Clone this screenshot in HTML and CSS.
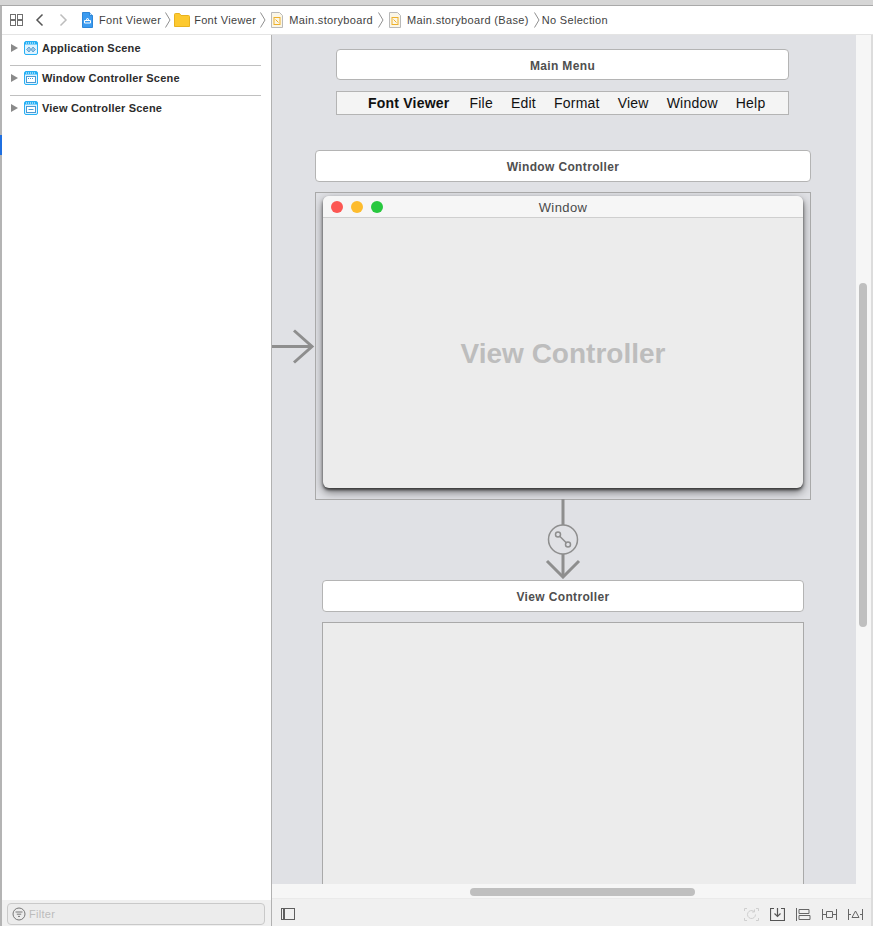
FILE: index.html
```html
<!DOCTYPE html>
<html lang="en">
<head>
<meta charset="utf-8">
<title>Font Viewer - Main.storyboard</title>
<link rel="stylesheet" href="styles.css">
</head>
<body>
<div class="app">
  <div class="topstrip"></div>
  <header class="jumpbar">
    <svg class="ic grid" width="16" height="14" viewBox="0 0 16 14"><g fill="none" stroke="#6f6f6f"><rect x="1.500" y="1.500" width="5" height="5"/><rect x="8.500" y="1.500" width="5" height="5"/><rect x="1.500" y="7.500" width="5" height="5"/><rect x="8.500" y="7.500" width="5" height="5"/></g></svg>
    <svg class="ic back" width="9" height="14" viewBox="0 0 9 14"><path d="M7.500 1.500 2 7l5.500 5.500" fill="none" stroke="#555" stroke-width="1.500"/></svg>
    <svg class="ic fwd" width="9" height="14" viewBox="0 0 9 14"><path d="M1.500 1.500 7 7l-5.500 5.500" fill="none" stroke="#bdbdbd" stroke-width="1.500"/></svg>
    <svg class="ic proj" width="11" height="16" viewBox="0 0 11 16"><path d="M.5.500h7l3 3v12H.5z" fill="#3b9bf0" stroke="#2e86d8"/><path d="M7.500.5v3h3" fill="#bfe0fb" stroke="#2e86d8"/><path d="M2.500 11V8.500h6V11zM4 8.500 5.500 6 7 8.500" fill="none" stroke="#fff"/></svg>
    <span class="crumb c1">Font Viewer</span>
    <svg class="sep s1" width="6" height="16" viewBox="0 0 6 16"><path d="M.5.500 5 8 .5 15.500" fill="none" stroke="#8f8f8f"/></svg>
    <svg class="ic folder" width="16" height="14" viewBox="0 0 16 14"><path d="M.5 13.500V1.500q0-1 1-1h4l1.500 2h7.500q1 0 1 1v10z" fill="#fdc92f" stroke="#e8b21f"/></svg>
    <span class="crumb c2">Font Viewer</span>
    <svg class="sep s2" width="6" height="16" viewBox="0 0 6 16"><path d="M.5.500 5 8 .5 15.500" fill="none" stroke="#8f8f8f"/></svg>
    <svg class="ic doc" width="12" height="16" viewBox="0 0 12 16"><path d="M.5.500h8l3 3v12H.5z" fill="#fbf6e6" stroke="#b9b9b9"/><rect x="3" y="5.500" width="6" height="7" fill="none" stroke="#eeb02a"/><path d="M4.500 7.500l3 3" stroke="#eeb02a"/></svg>
    <span class="crumb c3">Main.storyboard</span>
    <svg class="sep s3" width="6" height="16" viewBox="0 0 6 16"><path d="M.5.500 5 8 .5 15.500" fill="none" stroke="#8f8f8f"/></svg>
    <svg class="ic doc" width="12" height="16" viewBox="0 0 12 16"><path d="M.5.500h8l3 3v12H.5z" fill="#fbf6e6" stroke="#b9b9b9"/><rect x="3" y="5.500" width="6" height="7" fill="none" stroke="#eeb02a"/><path d="M4.500 7.500l3 3" stroke="#eeb02a"/></svg>
    <span class="crumb c4">Main.storyboard (Base)</span>
    <svg class="sep s4" width="6" height="16" viewBox="0 0 6 16"><path d="M.5.500 5 8 .5 15.500" fill="none" stroke="#8f8f8f"/></svg>
    <span class="crumb c5">No Selection</span>
  </header>

  <div class="main">
    <aside class="sidebar">
      <div class="tree">
        <div class="scene">
          <span class="tri"></span>
          <svg class="sicon" width="14" height="14" viewBox="0 0 14 14"><rect x=".5" y=".5" width="13" height="13" rx="1.500" fill="#dff3ff" stroke="#27b0f5"/><path d="M1 1h12v2.500H1z" fill="#27b0f5"/><path d="M2 2h1M4 2h1M6 2h1M8 2h1M10 2h1" stroke="#fff"/><path d="M2.500 8.500 5 6l2 2.500L9 6l2.500 2.500L9 11 7 8.500 5 11z" fill="#9cc4e2" stroke="#3f8fc8" stroke-width=".7"/></svg>
          <span class="sname">Application Scene</span>
        </div>
        <div class="scene">
          <span class="tri"></span>
          <svg class="sicon" width="14" height="14" viewBox="0 0 14 14"><rect x=".5" y=".5" width="13" height="13" rx="1.500" fill="#dff3ff" stroke="#27b0f5"/><path d="M1 1h12v2.500H1z" fill="#27b0f5"/><path d="M2 2h1M4 2h1M6 2h1M8 2h1M10 2h1" stroke="#fff"/><rect x="2.500" y="5.500" width="9" height="6" fill="#fff" stroke="#4b9ad2"/><path d="M4 7.500h6" stroke="#4b9ad2" stroke-dasharray="1 1"/></svg>
          <span class="sname">Window Controller Scene</span>
        </div>
        <div class="scene">
          <span class="tri"></span>
          <svg class="sicon" width="14" height="14" viewBox="0 0 14 14"><rect x=".5" y=".5" width="13" height="13" rx="1.500" fill="#dff3ff" stroke="#27b0f5"/><path d="M1 1h12v2.500H1z" fill="#27b0f5"/><path d="M2 2h1M4 2h1M6 2h1M8 2h1M10 2h1" stroke="#fff"/><rect x="2.500" y="5.500" width="9" height="6" fill="#fff" stroke="#4b9ad2"/><path d="M4.500 8.500h5" stroke="#4b9ad2"/></svg>
          <span class="sname">View Controller Scene</span>
        </div>
      </div>
      <div class="filterbar">
        <div class="filter">
          <svg width="14" height="14" viewBox="0 0 14 14"><circle cx="7" cy="7" r="6" fill="none" stroke="#777"/><path d="M3.500 5h7M4.800 7.200h4.400M6 9.400h2" stroke="#777"/></svg>
          <span class="filtertext">Filter</span>
        </div>
      </div>
    </aside>

    <section class="editor">
      <div class="viewport">
        <div class="canvas">
          <div class="node title menu-title">Main Menu</div>
          <div class="node menubar">
            <b>Font Viewer</b><span>File</span><span>Edit</span><span>Format</span><span>View</span><span>Window</span><span>Help</span>
          </div>
          <div class="node title wc-title">Window Controller</div>
          <div class="node wc-box">
            <div class="window">
              <div class="titlebar">
                <i class="dot red"></i><i class="dot yellow"></i><i class="dot green"></i>
                <span class="wintitle">Window</span>
              </div>
              <div class="winbody">View Controller</div>
            </div>
          </div>
          <svg class="node entry" width="44" height="36" viewBox="0 0 44 36"><path d="M0 18.500h39M22 2.500l18 16-18 16" fill="none" stroke="#8e8e8e" stroke-width="3"/></svg>
          <svg class="node segue" width="36" height="80" viewBox="0 0 36 80"><g fill="none" stroke="#8e8e8e"><path d="M18 0v26M18 55v22" stroke-width="3"/><circle cx="18" cy="40.500" r="14.500" stroke-width="1.500"/><path d="M2 62l16 16 16-16" stroke-width="3"/><path d="M14.500 37l7 7" stroke-width="1.500"/><circle cx="13" cy="35.500" r="2.500" stroke-width="1.500"/><circle cx="23" cy="45.500" r="2.500" stroke-width="1.500"/></g></svg>
          <div class="node title vc-title">View Controller</div>
          <div class="node vc-box"></div>
        </div>
        <div class="vtrack"><div class="vthumb"></div></div>
      </div>
      <div class="htrack"><div class="hthumb"></div></div>
      <footer class="bottombar">
        <svg width="14" height="12" viewBox="0 0 14 12"><rect x=".5" y=".5" width="13" height="11" fill="none" stroke="#5e5e5e"/><path d="M3 1v10" stroke="#5e5e5e" stroke-width="2"/></svg>
        <div class="tools">
          <svg width="15" height="13" viewBox="0 0 15 13"><g fill="none" stroke="#cfcfcf"><path d="M.5 3V.5H3M12 .5h2.500V3M14.500 10v2.500H12M3 12.500H.5V10"/><path d="M11.500 6.500a4 4 0 1 1-1.500-3.100M10.500 1.500V4H8"/></g></svg>
          <svg width="15" height="13" viewBox="0 0 15 13"><path d="M4 .5H.5v12h14V.5H11M7.500 0v8M4.500 5.500l3 3 3-3" fill="none" stroke="#555" stroke-width="1.200"/></svg>
          <svg width="15" height="13" viewBox="0 0 15 13"><path d="M.5 0v13M3 1.500h10v4H3zM3 7.500h11v4H3z" fill="none" stroke="#666"/></svg>
          <svg width="15" height="13" viewBox="0 0 15 13"><path d="M.5 1v11M14.500 1v11M.5 6.500H4M11 6.500h3.500M4.500 3.500h6v6h-6z" fill="none" stroke="#666"/></svg>
          <svg width="15" height="13" viewBox="0 0 15 13"><path d="M.5 1v11M14.500 1v11M.5 6.500H3M12 6.500h2.500M7.500 3 11 9.500H4z" fill="none" stroke="#666"/></svg>
        </div>
      </footer>
    </section>
    <div class="edge"></div>
  </div>
  <div class="marker"></div>
</div>
</body>
</html>
```

FILE: styles.css
```css
* { box-sizing: border-box; }
html, body { margin: 0; height: 100%; overflow: hidden; background: #fff; }
body { font-family: "Liberation Sans", Arial, sans-serif; }

.app { position: relative; width: 873px; height: 926px; display: flex; flex-direction: column; border-left: 2px solid #b4b4b4; }
.topstrip { height: 6px; margin-left: -2px; background: #d6d6d6; border-bottom: 1px solid #a9a9a9; flex: none; }
.marker { position: absolute; left: -2px; top: 135px; width: 2px; height: 20px; background: #1f6fe0; }

.jumpbar { flex: none; height: 29px; display: flex; align-items: center; background: #fff; padding-left: 7px; border-bottom: 1px solid #e4e4e4; }
.ic { flex: none; }
.crumb { font-size: 11px; letter-spacing: .33px; color: #3f3f3f; white-space: nowrap; }
.sep { flex: none; }
.grid { margin-right: 10px; }
.back { margin-right: 15px; }
.fwd { margin-right: 14px; }
.proj { margin-right: 6px; }
.c1 { margin-right: 4px; }
.s1 { margin-right: 3px; }
.folder { margin-right: 4px; }
.c2 { margin-right: 4px; }
.s2 { margin-right: 5px; }
.doc { margin-right: 6px; }
.c3 { margin-right: 5px; }
.s3 { margin-right: 5px; }
.c4 { margin-right: 5px; }
.s4 { margin-right: 2px; }

.main { flex: 1; display: flex; min-height: 0; }
.sidebar { width: 270px; flex: none; display: flex; flex-direction: column; border-right: 1px solid #b1b1b1; background: #fff; }
.tree { flex: 1; padding: 1px 10px 0 8px; }
.scene { height: 30px; padding-bottom: 5px; display: flex; align-items: center; border-bottom: 1px solid #c0c0c0; }
.scene:last-child { border-bottom-color: transparent; }
.tri { width: 0; height: 0; border-left: 7px solid #8a8a8a; border-top: 4.500px solid transparent; border-bottom: 4.500px solid transparent; margin-right: 6px; margin-left: 1px; }
.sicon { flex: none; margin-right: 4px; }
.sname { font-size: 11px; font-weight: 700; color: #2c2c2c; letter-spacing: .2px; white-space: nowrap; }

.filterbar { height: 26px; flex: none; background: #f0f0f0; padding: 3px 6px 1px 5px; }
.filter { height: 22px; border: 1px solid #c9c9c9; border-radius: 4px; background: #ececec; display: flex; align-items: center; padding-left: 4px; gap: 3px; }
.filtertext { font-size: 11px; letter-spacing: .3px; color: #bcbcbc; }

.editor { flex: 1; min-width: 0; display: flex; flex-direction: column; }
.viewport { flex: 1; min-height: 0; display: flex; }
.canvas { position: relative; width: 584px; background: #e0e1e5; overflow: hidden; }
.vtrack { width: 15px; background: #f6f6f6; position: relative; }
.vthumb { position: absolute; left: 3px; top: 248px; width: 8px; height: 344px; border-radius: 4px; background: #bfbfbf; }
.htrack { height: 14px; flex: none; background: #f6f6f6; position: relative; }
.hthumb { position: absolute; left: 198px; top: 4px; width: 225px; height: 8px; border-radius: 4px; background: #bfbfbf; }
.bottombar { height: 28px; flex: none; background: #f0f0f0; border-top: 1px solid #eaeaea; display: flex; align-items: center; justify-content: space-between; padding: 3px 8px 0 9px; }
.tools { display: flex; align-items: center; gap: 11px; }
.edge { width: 2px; flex: none; background: #dcdcdc; }

.node { position: absolute; }
.title { display: flex; align-items: center; justify-content: center; padding-top: 1px; background: #fff; border: 1px solid #b4b4b4; border-radius: 4px; font-size: 12px; font-weight: 700; letter-spacing: .35px; color: #4f4f4f; }
.menu-title { left: 64px; top: 14px; width: 453px; height: 31px; padding-top: 2px; }
.menubar { left: 64px; top: 56px; width: 453px; height: 24px; background: #f4f4f4; border: 1px solid #b4b4b4; display: flex; align-items: center; padding-left: 31px; gap: 18px; font-size: 14px; letter-spacing: .22px; color: #111; }
.menubar b { font-weight: 700; margin-right: 2px; }
.wc-title { left: 43px; top: 115px; width: 496px; height: 32px; }
.wc-box { left: 43px; top: 157px; width: 496px; height: 308px; border: 1px solid #a9a9a9; background: #e0e1e5; padding: 3px 7px 0 7px; overflow: hidden; }
.window { height: 292px; border-radius: 6px; overflow: hidden; box-shadow: 0 2px 3px rgba(0,0,0,.6), 0 4px 10px rgba(0,0,0,.5); display: flex; flex-direction: column; background: #ececec; }
.titlebar { height: 22px; flex: none; background: #f6f6f6; border-bottom: 1px solid #cfcfcf; position: relative; display: flex; align-items: center; padding-left: 8px; gap: 8px; }
.dot { width: 12px; height: 12px; border-radius: 50%; }
.red { background: #fc5753; }
.yellow { background: #fdbc2e; }
.green { background: #28c83f; }
.wintitle { position: absolute; left: 0; right: 0; padding-top: 2px; text-align: center; font-size: 13px; letter-spacing: .4px; color: #4a4a4a; }
.winbody { flex: 1; display: flex; align-items: center; justify-content: center; padding-top: 1px; font-size: 28px; font-weight: 700; color: #bdbdbd; }
.entry { left: 0; top: 293px; }
.segue { left: 273px; top: 464px; }
.vc-title { left: 50px; top: 545px; width: 482px; height: 32px; }
.vc-box { left: 50px; top: 587px; width: 482px; height: 300px; background: #ececec; border: 1px solid #a9a9a9; }
```
